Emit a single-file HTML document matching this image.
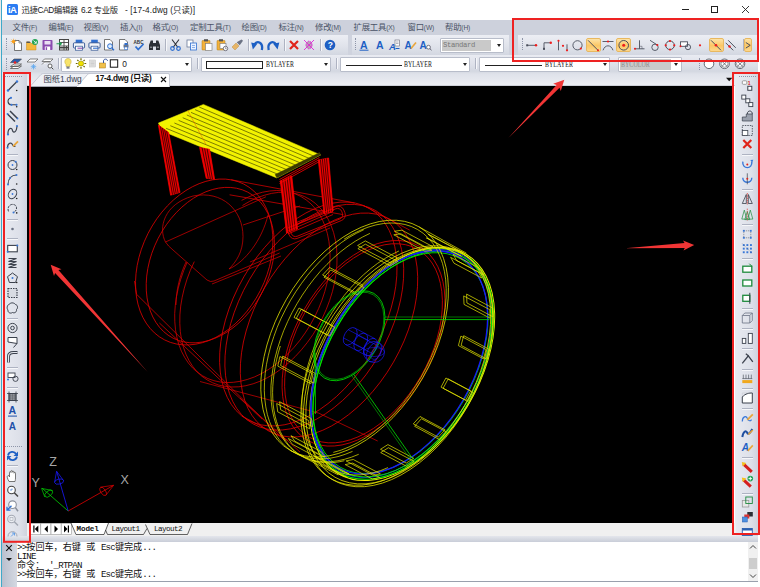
<!DOCTYPE html>
<html><head><meta charset="utf-8"><title>CAD</title><style>
html,body{margin:0;padding:0;}
body{width:760px;height:587px;overflow:hidden;background:#fff;position:relative;font-family:"Liberation Sans","Noto Sans CJK SC",sans-serif;}
.a{position:absolute;}
.t{position:absolute;white-space:nowrap;line-height:1;}
#title{left:0;top:0;width:760px;height:20px;background:#fff;}
#menu{left:2px;top:20px;width:756px;height:15px;background:#cdd1dc;}
#tb1{left:2px;top:35px;width:756px;height:20px;background:linear-gradient(#eceef4,#dfe2ea 60%,#d3d7e1);}
#tb2{left:2px;top:55px;width:756px;height:17px;background:linear-gradient(#e9ebf2,#dde0e9 60%,#d2d6e0);}
#tabrow{left:2px;top:71px;width:756px;height:15px;background:linear-gradient(#d3d7e0,#dfe2ea 20%,#e8eaf0 70%,#eef0f4);}
#ltb{left:2px;top:72px;width:25px;height:469px;background:linear-gradient(90deg,#e8eaf1,#dde0e9 70%,#cfd3de);}
#rtb{left:735px;top:72px;width:23px;height:464px;background:linear-gradient(90deg,#e8eaf1,#dde0e9 70%,#cfd3de);}
#canvas{left:27px;top:86px;width:706px;height:437px;background:#000;}
#ltabs{left:27px;top:523px;width:709px;height:13px;background:#f0f0f0;}
#split{left:2px;top:536px;width:756px;height:6px;background:linear-gradient(#e4e6ec,#c9cdd8);}
#cmdl{left:2px;top:542px;width:15px;height:45px;background:linear-gradient(90deg,#b9bfcd,#d5d9e2);}
#cmd{left:17px;top:542px;width:741px;height:39px;background:#fff;}
#cmdin{left:17px;top:582px;width:741px;height:5px;background:#fff;}
.mi{top:23px;font-size:8.4px;color:#4a5366;letter-spacing:-0.2px;}
.mi i{font-style:normal;font-size:6.6px;letter-spacing:-0.1px;}
.cmdt{left:17px;font-size:9.1px;color:#111;font-family:"Liberation Mono","Noto Sans Mono CJK SC","Noto Sans CJK SC",monospace;height:9px;line-height:9px;}
.cmdt b{font-weight:normal;letter-spacing:-0.8px;}
.combo{position:absolute;background:#fff;border:1px solid #b8bdca;box-sizing:border-box;border-radius:1px;}
.combo .ar{position:absolute;right:2.2px;top:50%;margin-top:-1px;width:0;height:0;border-left:2px solid transparent;border-right:2px solid transparent;border-top:3px solid #222;}
.sep{position:absolute;width:1px;background:#aeb3c2;box-shadow:1px 0 0 #f6f7fa;}
.grip{position:absolute;width:1px;border-left:1px dotted #8e95a8;}
.hl{position:absolute;background:linear-gradient(#fde3a6,#fbc766 55%,#fdd88c);border:1px solid #e8b860;box-sizing:border-box;border-radius:2px;}
.by{font-family:"Liberation Serif",serif;font-size:7.4px;color:#111;letter-spacing:0.1px;transform:scaleX(0.8);transform-origin:0 0;}
</style></head><body>
<div class="a" id="title"></div>
<div class="a" style="left:7px;top:4px;width:11px;height:10.5px;background:#2b7cf2;border-radius:1.5px;"></div>
<div class="t" style="left:8px;top:5.2px;font-size:9.5px;font-weight:bold;color:#fff;letter-spacing:-0.6px;">iA</div>
<div class="t" id="t1" style="left:21.6px;top:5.8px;font-size:8.3px;color:#1a1a1a;letter-spacing:-0.35px;">迅捷CAD编辑器</div>
<div class="t" id="t2" style="left:81px;top:5.8px;font-size:8.3px;color:#1a1a1a;letter-spacing:-0.3px;">6.2 专业版</div>
<div class="t" id="t3" style="left:125px;top:5.8px;font-size:8.3px;color:#1a1a1a;letter-spacing:0.11px;">- [17-4.dwg (只读)]</div>
<div class="a" style="left:681.5px;top:9px;width:7px;height:1px;background:#222;"></div>
<div class="a" style="left:711px;top:6px;width:7px;height:7px;border:1px solid #222;box-sizing:border-box;"></div>
<svg class="a" style="left:741px;top:5px" width="9" height="9"><path d="M1 1L8 8M8 1L1 8" stroke="#222" stroke-width="0.9" fill="none"/></svg>
<div class="a" style="left:1px;top:0;width:1px;height:587px;background:#3fa9c9;"></div>
<div class="a" style="left:0;top:0;width:1px;height:587px;background:#e8e8e8;"></div>
<div class="a" id="menu"></div><div class="t mi" style="left:12.5px">文件<i>(F)</i></div><div class="t mi" style="left:48.5px">编辑<i>(E)</i></div><div class="t mi" style="left:83.5px">视图<i>(V)</i></div><div class="t mi" style="left:120.0px">插入<i>(I)</i></div><div class="t mi" style="left:152.5px">格式<i>(O)</i></div><div class="t mi" style="left:190.0px">定制工具<i>(T)</i></div><div class="t mi" style="left:241.5px">绘图<i>(D)</i></div><div class="t mi" style="left:278.5px">标注<i>(N)</i></div><div class="t mi" style="left:315.0px">修改<i>(M)</i></div><div class="t mi" style="left:353.5px">扩展工具<i>(X)</i></div><div class="t mi" style="left:407.5px">窗口<i>(W)</i></div><div class="t mi" style="left:445.0px">帮助<i>(H)</i></div>
<div class="a" id="tb1"></div><div class="a" id="tb2"></div>
<div class="a" style="left:347.5px;top:35px;width:4px;height:20px;background:#cfd3de;"></div><div class="a" style="left:509px;top:35px;width:8.5px;height:20px;background:#cfd3de;"></div>
<div class="a" id="tabrow"></div>
<div class="a" id="ltb"></div><div class="a" id="rtb"></div>
<div class="a" style="left:27px;top:85px;width:708px;height:1px;background:#cdd0d8;"></div><div class="a" id="canvas"></div>
<div class="a" id="ltabs"></div><div class="a" id="split"></div>
<div class="a" id="cmdl"></div><div class="a" id="cmd"></div>
<div class="a" style="left:17px;top:581px;width:741px;height:1px;background:#9aa0ad;"></div><div class="a" id="cmdin"></div>
<div class="t cmdt" style="top:543px"><b>&gt;&gt;</b>按回车，右键 或 <b>Esc</b>键完成<b>...</b></div>
<div class="t cmdt" style="top:552px"><b>LINE</b></div>
<div class="t cmdt" style="top:561px">命令：<b> '_RTPAN</b></div>
<div class="t cmdt" style="top:570px"><b>&gt;&gt;</b>按回车，右键 或 <b>Esc</b>键完成<b>...</b></div>
<svg class="a" style="left:5px;top:544px" width="8" height="8"><path d="M1.2 1.2L6.8 6.8M6.8 1.2L1.2 6.8" stroke="#111" stroke-width="1.1"/></svg>
<div class="a" style="left:6px;top:558px;width:0;height:0;border-left:3px solid transparent;border-right:3px solid transparent;border-top:3.5px solid #111;"></div>
<div class="a" style="left:748px;top:542px;width:10px;height:39px;background:#f0f0f0;"></div>
<div class="a" style="left:749px;top:558px;width:8px;height:11px;background:#cdcdcd;"></div>
<svg class="a" style="left:749px;top:544px" width="8" height="6"><path d="M1 4.5L4 1.5L7 4.5" stroke="#444" stroke-width="1" fill="none"/></svg>
<svg class="a" style="left:749px;top:573px" width="8" height="6"><path d="M1 1.5L4 4.5L7 1.5" stroke="#444" stroke-width="1" fill="none"/></svg>
<svg class="a" style="left:27px;top:72px" width="720" height="15">
<path d="M3 14.5 L14 2.5 Q15 1.5 16.5 1.5 L63 1.5 L58 8 L53 14.5 Z" fill="#eef0f5" stroke="#b9bdca" stroke-width="0.7"/>
<path d="M50 14.5 L60.5 2.5 Q61.5 1.5 63 1.5 L141 1.5 Q142.5 1.5 142.5 3 L142.5 14.5 Z" fill="#fff" stroke="#b0b5c3" stroke-width="0.7"/>
<path d="M50 14.6 L142.5 14.6" stroke="#fff" stroke-width="1"/>
<path d="M699 5.8 L705.4 5.8 L702.2 9.3 Z" fill="#111"/>
</svg>
<div class="t" style="left:43.5px;top:75px;font-size:8.3px;color:#333b4d;letter-spacing:-0.1px;">图纸1.dwg</div>
<div class="t" style="left:95.5px;top:75px;font-size:8.2px;color:#111;font-weight:bold;letter-spacing:-0.25px;">17-4.dwg (只读)</div>
<svg class="a" style="left:160px;top:75.5px" width="7" height="7"><path d="M1 1L6 6M6 1L1 6" stroke="#111" stroke-width="1.1"/></svg>
<svg class="a" style="left:27px;top:523px" width="220" height="13">
<rect x="0" y="0" width="220" height="13" fill="#f0f0f0"/>
<g fill="#fff" stroke="#9a9a9a" stroke-width="0.6">
<rect x="3.6" y="0.5" width="10.2" height="11"/><rect x="13.8" y="0.5" width="10.2" height="11"/><rect x="24" y="0.5" width="10.2" height="11"/><rect x="34.2" y="0.5" width="10.2" height="11"/>
</g>
<g fill="#000">
<path d="M11.3 2.5 L7.8 6 L11.3 9.5Z"/><rect x="6.3" y="2.5" width="1.2" height="7"/>
<path d="M20.8 2.5 L17.3 6 L20.8 9.5Z"/>
<path d="M27.5 2.5 L31 6 L27.5 9.5Z"/>
<path d="M37 2.5 L40.5 6 L37 9.5Z"/><rect x="40.8" y="2.5" width="1.2" height="7"/>
</g>
<path d="M44 0 L49 11.5 L77 11.5 L81.5 0" fill="#fff" stroke="#222" stroke-width="0.7"/>
<path d="M78.5 7 L80.5 11.5 L116.5 11.5 L120 5.5 M118.5 1.5 L123 11.5 L160.5 11.5 L165 0.5" fill="none" stroke="#222" stroke-width="0.7"/>
</svg>
<div class="t" style="left:76.5px;top:525.5px;font-family:'Liberation Mono',monospace;font-size:7.6px;color:#111;letter-spacing:-0.1px;font-weight:bold;">Model</div>
<div class="t" style="left:111.5px;top:525.5px;font-family:'Liberation Mono',monospace;font-size:7.6px;color:#111;letter-spacing:-0.1px;letter-spacing:-0.55px;">Layout1</div>
<div class="t" style="left:154px;top:525.5px;font-family:'Liberation Mono',monospace;font-size:7.6px;color:#111;letter-spacing:-0.1px;letter-spacing:-0.55px;">Layout2</div>
<div class="sep" style="left:165.0px;top:39px;height:12px"></div>
<div class="sep" style="left:248.0px;top:39px;height:12px"></div>
<div class="sep" style="left:284.0px;top:39px;height:12px"></div>
<div class="sep" style="left:319.5px;top:39px;height:12px"></div>
<div class="sep" style="left:742.5px;top:39px;height:12px"></div>
<div class="sep" style="left:58.0px;top:58px;height:11px"></div>
<div class="sep" style="left:197.0px;top:58px;height:11px"></div>
<div class="sep" style="left:335.5px;top:58px;height:11px"></div>
<div class="sep" style="left:474.5px;top:58px;height:11px"></div>
<div class="grip" style="left:6.0px;top:38.0px;height:12px"></div>
<div class="grip" style="left:354.5px;top:38.0px;height:12px"></div>
<div class="grip" style="left:522.0px;top:38.0px;height:12px"></div>
<div class="grip" style="left:6.0px;top:57.5px;height:12px"></div>
<div class="grip" style="left:699.0px;top:57.5px;height:12px"></div>
<div class="hl" style="left:585.5px;top:37.5px;width:15px;height:14.5px"></div>
<div class="hl" style="left:616.2px;top:37.5px;width:15px;height:14.5px"></div>
<div class="hl" style="left:708.5px;top:37.5px;width:15px;height:14.5px"></div>
<div class="hl" style="left:744px;top:37.5px;width:8px;height:14.5px"></div>
<div class="a" style="left:7px;top:154.0px;width:11px;height:1px;background:#aeb3c2;box-shadow:0 1px 0 #f6f7fa"></div>
<div class="a" style="left:7px;top:219.0px;width:11px;height:1px;background:#aeb3c2;box-shadow:0 1px 0 #f6f7fa"></div>
<div class="a" style="left:7px;top:238.0px;width:11px;height:1px;background:#aeb3c2;box-shadow:0 1px 0 #f6f7fa"></div>
<div class="a" style="left:7px;top:318.0px;width:11px;height:1px;background:#aeb3c2;box-shadow:0 1px 0 #f6f7fa"></div>
<div class="a" style="left:7px;top:367.0px;width:11px;height:1px;background:#aeb3c2;box-shadow:0 1px 0 #f6f7fa"></div>
<div class="a" style="left:7px;top:387.0px;width:11px;height:1px;background:#aeb3c2;box-shadow:0 1px 0 #f6f7fa"></div>
<div class="a" style="left:7px;top:465.0px;width:11px;height:1px;background:#aeb3c2;box-shadow:0 1px 0 #f6f7fa"></div>
<div class="a" style="left:742px;top:154.4px;width:11px;height:1px;background:#aeb3c2;box-shadow:0 1px 0 #f6f7fa"></div>
<div class="a" style="left:742px;top:189.0px;width:11px;height:1px;background:#aeb3c2;box-shadow:0 1px 0 #f6f7fa"></div>
<div class="a" style="left:742px;top:224.0px;width:11px;height:1px;background:#aeb3c2;box-shadow:0 1px 0 #f6f7fa"></div>
<div class="a" style="left:742px;top:258.0px;width:11px;height:1px;background:#aeb3c2;box-shadow:0 1px 0 #f6f7fa"></div>
<div class="a" style="left:742px;top:308.0px;width:11px;height:1px;background:#aeb3c2;box-shadow:0 1px 0 #f6f7fa"></div>
<div class="a" style="left:742px;top:328.0px;width:11px;height:1px;background:#aeb3c2;box-shadow:0 1px 0 #f6f7fa"></div>
<div class="a" style="left:742px;top:348.0px;width:11px;height:1px;background:#aeb3c2;box-shadow:0 1px 0 #f6f7fa"></div>
<div class="a" style="left:742px;top:369.0px;width:11px;height:1px;background:#aeb3c2;box-shadow:0 1px 0 #f6f7fa"></div>
<div class="a" style="left:742px;top:388.0px;width:11px;height:1px;background:#aeb3c2;box-shadow:0 1px 0 #f6f7fa"></div>
<div class="a" style="left:742px;top:408.0px;width:11px;height:1px;background:#aeb3c2;box-shadow:0 1px 0 #f6f7fa"></div>
<div class="a" style="left:742px;top:456.7px;width:11px;height:1px;background:#aeb3c2;box-shadow:0 1px 0 #f6f7fa"></div>
<div class="a" style="left:742px;top:492.8px;width:11px;height:1px;background:#aeb3c2;box-shadow:0 1px 0 #f6f7fa"></div>
<div class="a" style="left:5px;top:75.5px;width:17px;height:0;border-top:1px dotted #8e95a8"></div>
<div class="a" style="left:5px;top:446.0px;width:17px;height:0;border-top:1px dotted #8e95a8"></div>
<div class="a" style="left:739px;top:75.5px;width:17px;height:0;border-top:1px dotted #8e95a8"></div>
<div class="combo" style="left:440px;top:37.5px;width:64px;height:15px;"><div class="a" style="left:1px;top:1px;width:49px;height:11px;background:#c9c9c9;"></div><div class="ar"></div></div>
<div class="t" style="left:443px;top:42.3px;font-family:'Liberation Mono',monospace;font-size:7.2px;color:#777;letter-spacing:-0.32px;">Standard</div>
<div class="combo" style="left:61px;top:57px;width:131px;height:14.5px;"><div class="ar"></div></div>
<div class="t" style="left:122.3px;top:59.8px;font-size:8.4px;color:#222;">0</div>
<div class="combo" style="left:201px;top:57px;width:130px;height:14.5px;"><div class="a" style="left:4px;top:3px;width:57px;height:7.5px;border:1px solid #222;box-sizing:border-box;background:#fff;"></div><div class="ar"></div></div>
<div class="t by" style="left:265.5px;top:61.4px;">BYLAYER</div>
<div class="combo" style="left:340px;top:57px;width:130px;height:14.5px;"><div class="a" style="left:4.5px;top:6.5px;width:56px;height:1px;background:#222;"></div><div class="ar"></div></div>
<div class="t by" style="left:404px;top:61.4px;">BYLAYER</div>
<div class="combo" style="left:479px;top:57px;width:131px;height:14.5px;"><div class="a" style="left:4.5px;top:6.5px;width:57px;height:1px;background:#222;"></div><div class="ar"></div></div>
<div class="t by" style="left:545px;top:61.4px;">BYLAYER</div>
<div class="combo" style="left:617.5px;top:57px;width:64px;height:14.5px;"><div class="a" style="left:1px;top:1px;width:51px;height:10.5px;background:#c9c9c9;"></div><div class="ar"></div></div>
<div class="t by" style="left:620.5px;top:61.4px;color:#8a8a8a;">BYCOLOR</div>
<svg class="a" style="left:0;top:0" width="760" height="587" viewBox="0 0 760 587"><defs><clipPath id="cv"><rect x="27" y="86" width="706" height="437"/></clipPath></defs><g clip-path="url(#cv)"><g fill="none"><ellipse cx="204.2" cy="262.0" rx="87.4" ry="63.0" transform="rotate(-63.1 204.2 262.0)" stroke="#dc0000" stroke-width="0.75"/><polyline points="241.6,200.4 248.6,196.9 255.6,194.2 262.6,192.2 269.5,191.0 276.3,190.5 282.9,190.8 289.2,192.0 295.3,193.9 300.9,196.5 306.2,199.9 311.1,204.0 315.4,208.8 319.3,214.2 322.6,220.2 325.3,226.7 327.4,233.7 328.9,241.2 329.8,249.0 330.1,257.2 329.7,265.6 328.7,274.1 327.1,282.8 324.8,291.5 322.0,300.1 318.6,308.6 314.6,317.0 310.2,325.1 305.2,332.9 299.9,340.3 294.1,347.3 288.0,353.7 281.7,359.7 275.0,365.0 268.2,369.7 261.3,373.7 254.3,377.0 247.2,379.5 240.3,381.3 233.4,382.3 226.7,382.6 220.1,382.0 213.9,380.7 207.9,378.6 202.4,375.7 197.2,372.1 192.5,367.9 188.3,362.9 184.6,357.3 181.4,351.2 178.8,344.5 176.9,337.3 175.5,329.8 174.8,321.8 174.7,313.6 175.3,305.2 176.5,296.6 178.3,287.9 180.7,279.3 183.7,270.6 187.2,262.1" stroke="#dc0000" stroke-width="0.75" fill="none"/><polyline points="242.5,205.5 249.7,201.3 256.9,197.9 264.2,195.3 271.4,193.4 278.5,192.4 285.4,192.2 292.1,192.8 298.5,194.3 304.5,196.6 310.2,199.6 315.4,203.4 320.2,208.0 324.4,213.2 328.1,219.1 331.1,225.6 333.6,232.6 335.4,240.2 336.6,248.1 337.0,256.4 336.9,265.0 336.0,273.8 334.5,282.7 332.4,291.7 329.6,300.6 326.2,309.5 322.3,318.2 317.8,326.6 312.8,334.8 307.3,342.5 301.4,349.8 295.2,356.6 288.6,362.9 281.8,368.5 274.8,373.4 267.6,377.6 260.4,381.1 253.1,383.8 245.9,385.7 238.8,386.8 231.9,387.0 225.2,386.4 218.8,385.1 212.7,382.8 207.0,379.8 201.7,376.1 197.0,371.6 192.7,366.4 189.0,360.5 185.9,354.1 183.4,347.1 181.5,339.6 180.3,331.7 179.8,323.4 179.9,314.9 180.7,306.1 182.2,297.2 184.3,288.2 187.0,279.2 190.3,270.4 194.3,261.6" stroke="#dc0000" stroke-width="0.75" fill="none"/><ellipse cx="308.3" cy="314.0" rx="122.0" ry="74.4" transform="rotate(-60.0 308.3 314.0)" stroke="#dc0000" stroke-width="0.75"/><ellipse cx="314.3" cy="317.2" rx="123.0" ry="75.0" transform="rotate(-60.0 314.3 317.2)" stroke="#dc0000" stroke-width="0.75"/><ellipse cx="329.0" cy="325.0" rx="122.0" ry="74.4" transform="rotate(-60.0 329.0 325.0)" stroke="#dc0000" stroke-width="0.75"/><ellipse cx="363.5" cy="343.3" rx="112.0" ry="68.3" transform="rotate(-60.0 363.5 343.3)" stroke="#dc0000" stroke-width="0.75"/><ellipse cx="363.5" cy="343.3" rx="108.5" ry="66.2" transform="rotate(-60.0 363.5 343.3)" stroke="#dc0000" stroke-width="0.75"/><ellipse cx="210.3" cy="265.1" rx="82.0" ry="58.6" transform="rotate(-63.0 210.3 265.1)" stroke="#dc0000" stroke-width="0.75"/><line x1="231.2" y1="179.8" x2="354.5" y2="202.9" stroke="#dc0000" stroke-width="0.75"/><line x1="363.4" y1="205.5" x2="409.8" y2="230.2" stroke="#dc0000" stroke-width="0.75"/><line x1="241.9" y1="416.0" x2="288.2" y2="440.7" stroke="#dc0000" stroke-width="0.75"/><line x1="229.6" y1="194.8" x2="343.2" y2="214.6" stroke="#dc0000" stroke-width="0.75"/><path d="M134.5 281 L136.6 294.3 L285 441" stroke="#dc0000" stroke-width="0.75" fill="none"/><line x1="159.4" y1="323.0" x2="262.0" y2="419.0" stroke="#dc0000" stroke-width="0.75"/><path d="M165.5 242 C158 228 164 204 193 196 C222 190 243 210 243 236.5 C243 252 236 262 229 269" stroke="#dc0000" stroke-width="0.70" fill="none"/><path d="M165.5 242 L265.9 196.8" stroke="#dc0000" stroke-width="0.70" fill="none"/><path d="M165.5 242 Q168 246 173 250 L207 280 Q210.5 282.5 214 281 L279.6 253" stroke="#dc0000" stroke-width="0.70" fill="none"/><path d="M212 284 L281 256" stroke="#dc0000" stroke-width="0.70" fill="none"/><path d="M186 262 C180 275 176 290 176 305" stroke="#dc0000" stroke-width="0.70" fill="none"/><path d="M229 269 C245 262 262 240 268 215" stroke="#dc0000" stroke-width="0.70" fill="none"/><path d="M243 225 L300 206 M250 262 L330 228" stroke="#dc0000" stroke-width="0.70" fill="none"/><rect x="286.5" y="215.0" width="60.0" height="15.0" rx="6.0" transform="rotate(-22 316.5 222.5)" stroke="#dc0000" stroke-width="0.75"/><rect x="289.0" y="217.0" width="55.0" height="11.0" rx="4.4" transform="rotate(-22 316.5 222.5)" stroke="#dc0000" stroke-width="0.75"/><path d="M200 381.5 L318.4 413 L377.7 441" stroke="#dc0000" stroke-width="0.70" fill="none"/><path d="M240 398 L300 452" stroke="#dc0000" stroke-width="0.70" fill="none"/><polygon points="158.4,123.1 203.4,104.4 320.6,154.9 276.8,177.9 162.0,131.0" stroke="#e8e800" stroke-width="0.50" fill="#f2f200"/><line x1="166.1" y1="128.3" x2="281.2" y2="175.6" stroke="#1a1a00" stroke-width="0.55"/><line x1="170.3" y1="125.7" x2="285.6" y2="173.3" stroke="#1a1a00" stroke-width="0.55"/><line x1="174.4" y1="123.0" x2="289.9" y2="171.0" stroke="#1a1a00" stroke-width="0.55"/><line x1="178.6" y1="120.4" x2="294.3" y2="168.7" stroke="#1a1a00" stroke-width="0.55"/><line x1="182.7" y1="117.7" x2="298.7" y2="166.4" stroke="#1a1a00" stroke-width="0.55"/><line x1="186.8" y1="115.0" x2="303.1" y2="164.1" stroke="#1a1a00" stroke-width="0.55"/><line x1="191.0" y1="112.4" x2="307.5" y2="161.8" stroke="#1a1a00" stroke-width="0.55"/><line x1="195.1" y1="109.7" x2="311.8" y2="159.5" stroke="#1a1a00" stroke-width="0.55"/><line x1="199.3" y1="107.1" x2="316.2" y2="157.2" stroke="#1a1a00" stroke-width="0.55"/><polygon points="276.8,177.9 320.6,154.9 319.5,152.5 275.0,174.5" stroke="#555500" stroke-width="0.30" fill="#3a3a00"/><polygon points="158.4,125.0 170.6,195.2 180.0,192.4 168.7,132.5" stroke="#ff0000" stroke-width="0.70" fill="#f00000"/><line x1="160.5" y1="126.5" x2="172.5" y2="194.6" stroke="#200000" stroke-width="0.75"/><line x1="162.5" y1="128.0" x2="174.4" y2="194.1" stroke="#200000" stroke-width="0.75"/><line x1="164.6" y1="129.5" x2="176.2" y2="193.5" stroke="#200000" stroke-width="0.75"/><line x1="166.6" y1="131.0" x2="178.1" y2="193.0" stroke="#200000" stroke-width="0.75"/><polygon points="199.6,147.4 206.2,178.3 214.6,179.3 209.6,149.3" stroke="#ff0000" stroke-width="0.70" fill="#f00000"/><line x1="202.1" y1="147.9" x2="208.3" y2="178.6" stroke="#200000" stroke-width="0.75"/><line x1="204.6" y1="148.4" x2="210.4" y2="178.8" stroke="#200000" stroke-width="0.75"/><line x1="207.1" y1="148.8" x2="212.5" y2="179.1" stroke="#200000" stroke-width="0.75"/><polygon points="280.3,181.0 286.5,233.0 297.5,229.0 291.8,176.0" stroke="#ff0000" stroke-width="0.70" fill="#f00000"/><line x1="282.6" y1="180.0" x2="288.7" y2="232.2" stroke="#200000" stroke-width="0.75"/><line x1="284.9" y1="179.0" x2="290.9" y2="231.4" stroke="#200000" stroke-width="0.75"/><line x1="287.2" y1="178.0" x2="293.1" y2="230.6" stroke="#200000" stroke-width="0.75"/><line x1="289.5" y1="177.0" x2="295.3" y2="229.8" stroke="#200000" stroke-width="0.75"/><polygon points="318.3,160.0 324.0,214.0 333.2,211.0 328.6,158.0" stroke="#ff0000" stroke-width="0.70" fill="#f00000"/><line x1="320.4" y1="159.6" x2="325.8" y2="213.4" stroke="#200000" stroke-width="0.75"/><line x1="322.4" y1="159.2" x2="327.7" y2="212.8" stroke="#200000" stroke-width="0.75"/><line x1="324.5" y1="158.8" x2="329.5" y2="212.2" stroke="#200000" stroke-width="0.75"/><line x1="326.5" y1="158.4" x2="331.4" y2="211.6" stroke="#200000" stroke-width="0.75"/><line x1="279.5" y1="179.5" x2="319.5" y2="157.5" stroke="#ff0000" stroke-width="0.80"/><line x1="279.5" y1="181.5" x2="319.5" y2="159.5" stroke="#ff0000" stroke-width="0.80"/><line x1="279.5" y1="183.5" x2="319.5" y2="161.5" stroke="#ff0000" stroke-width="0.80"/><line x1="288.0" y1="234.0" x2="333.0" y2="214.5" stroke="#ff0000" stroke-width="0.70"/><line x1="288.0" y1="231.0" x2="333.0" y2="211.5" stroke="#ff0000" stroke-width="0.70"/><line x1="288.0" y1="228.0" x2="333.0" y2="208.5" stroke="#ff0000" stroke-width="0.70"/><line x1="187.5" y1="110.0" x2="206.0" y2="144.5" stroke="#e06000" stroke-width="0.50"/><ellipse cx="402.3" cy="364.0" rx="127.0" ry="77.5" transform="rotate(-60.0 402.3 364.0)" stroke="#e8e800" stroke-width="1.00"/><ellipse cx="402.3" cy="364.0" rx="125.6" ry="76.6" transform="rotate(-60.0 402.3 364.0)" stroke="#00e400" stroke-width="1.10"/><ellipse cx="401.4" cy="363.5" rx="124.2" ry="75.8" transform="rotate(-60.0 401.4 363.5)" stroke="#1818ff" stroke-width="0.80"/><ellipse cx="402.3" cy="364.0" rx="123.0" ry="75.0" transform="rotate(-60.0 402.3 364.0)" stroke="#00e400" stroke-width="1.00"/><ellipse cx="400.5" cy="363.1" rx="120.3" ry="73.4" transform="rotate(-60.0 400.5 363.1)" stroke="#00e400" stroke-width="0.80"/><ellipse cx="399.2" cy="362.4" rx="121.6" ry="74.2" transform="rotate(-60.0 399.2 362.4)" stroke="#1818ff" stroke-width="1.30"/><ellipse cx="354.6" cy="338.6" rx="129.0" ry="78.7" transform="rotate(-60.0 354.6 338.6)" stroke="#e8e800" stroke-width="0.70"/><polyline points="344.1,239.1 352.1,234.3 360.1,230.4 368.0,227.2 375.9,224.9 383.6,223.5 391.1,223.0 398.2,223.3 405.1,224.5 411.6,226.6 417.6,229.5 423.2,233.3 428.2,237.9 432.7,243.2 436.6,249.3 439.8,256.0 442.5,263.4 444.4,271.3 445.7,279.8 446.2,288.7 446.1,297.9 445.3,307.5 443.8,317.4 441.6,327.4 438.7,337.4 435.2,347.5 431.1,357.5 426.4,367.4 421.2,377.1 415.4,386.4 409.2,395.4 402.6,404.0 395.6,412.1 388.3,419.6 380.8,426.5 373.0,432.7 365.1,438.2 357.1,443.0 349.1,446.9 341.2,450.1 333.3,452.4" stroke="#e8e800" stroke-width="0.70"/><polyline points="352.5,451.4 345.2,454.3 338.0,456.6 330.8,458.1 323.9,458.8 317.1,458.9 310.6,458.2 304.4,456.8 298.6,454.7 293.1,451.9 288.0,448.4 283.3,444.2 279.1,439.4 275.4,434.0 272.2,428.0 269.5,421.5 267.3,414.4 265.8,406.9 264.8,399.0 264.3,390.8 264.5,382.2 265.2,373.4 266.5,364.3 268.4,355.2 270.8,345.9 273.8,336.6 277.2,327.3 281.2,318.1 285.7,309.1 290.6,300.2 295.9,291.6 301.6,283.3 307.6,275.3 314.0,267.8 320.6,260.7 327.5,254.0 334.5,248.0 341.7,242.4 349.0,237.5 356.4,233.3 363.8,229.7" stroke="#e8e800" stroke-width="0.70"/><polyline points="358.7,454.3 351.4,457.2 344.2,459.4 337.1,460.9 330.2,461.7 323.5,461.7 317.0,461.1 310.8,459.7 305.0,457.6 299.5,454.8 294.4,451.3 289.8,447.1 285.6,442.3 281.9,436.9 278.7,430.9 276.0,424.4 273.9,417.4 272.3,410.0 271.3,402.1 270.9,393.9 271.0,385.3 271.8,376.5 273.1,367.5 274.9,358.4 277.3,349.2 280.3,339.9 283.7,330.7 287.7,321.5 292.1,312.5 297.0,303.7 302.3,295.1 308.0,286.8 314.0,278.9 320.3,271.3 327.0,264.3 333.8,257.7 340.8,251.6 348.0,246.1 355.3,241.2 362.6,237.0 369.9,233.4" stroke="#e8e800" stroke-width="0.70"/><polyline points="388.0,467.6 380.8,470.5 373.8,472.6 366.8,474.1 360.0,474.9 353.4,474.9 347.1,474.3 341.0,472.9 335.3,470.8 329.9,468.1 324.9,464.7 320.3,460.6 316.2,455.9 312.6,450.6 309.5,444.7 306.9,438.4 304.8,431.5 303.2,424.2 302.3,416.4 301.8,408.4 302.0,400.0 302.7,391.4 304.0,382.6 305.8,373.6 308.2,364.6 311.0,355.5 314.4,346.4 318.3,337.4 322.7,328.6 327.5,319.9 332.7,311.5 338.2,303.4 344.1,295.6 350.3,288.2 356.8,281.3 363.5,274.8 370.4,268.9 377.4,263.5 384.6,258.7 391.8,254.5 398.9,251.0" stroke="#e8e800" stroke-width="0.70"/><polyline points="344.4,460.7 339.1,461.8 334.0,462.5 328.9,462.7 324.0,462.6 319.2,462.1 314.6,461.2 310.2,459.8 305.9,458.1 301.8,456.0 298.0,453.6 294.4,450.7 291.0,447.5 287.9,444.0 285.1,440.1 282.5,435.9 280.2,431.4 278.2,426.6 276.5,421.5 275.1,416.2 274.0,410.6 273.2,404.8 272.8,398.8 272.6,392.6 272.8,386.3 273.3,379.8 274.1,373.2 275.2,366.5 276.6,359.7 278.3,352.8 280.3,346.0" stroke="#e8e800" stroke-width="0.70"/><ellipse cx="398.3" cy="367.0" rx="130.5" ry="79.6" transform="rotate(-60.0 398.3 367.0)" stroke="#e8e800" stroke-width="0.70"/><ellipse cx="395.8" cy="365.5" rx="130.5" ry="79.6" transform="rotate(-60.0 395.8 365.5)" stroke="#e8e800" stroke-width="0.70"/><ellipse cx="399.3" cy="366.0" rx="128.5" ry="78.4" transform="rotate(-60.0 399.3 366.0)" stroke="#e8e800" stroke-width="0.70"/><line x1="419.1" y1="226.9" x2="466.3" y2="253.1" stroke="#e8e800" stroke-width="0.70"/><line x1="290.1" y1="450.4" x2="338.3" y2="474.9" stroke="#e8e800" stroke-width="0.70"/><polygon points="466.6,294.1 466.9,302.9 492.9,316.8 492.7,308.0" stroke="#e8e800" stroke-width="0.70" fill="none"/><polygon points="463.7,295.9 464.0,304.4 490.0,318.2 489.8,309.7" stroke="#e8e800" stroke-width="0.70" fill="none"/><polygon points="463.7,335.7 461.1,345.4 486.2,358.8 488.8,349.1" stroke="#e8e800" stroke-width="0.70" fill="none"/><polygon points="460.9,336.1 458.4,345.6 483.5,358.9 486.0,349.5" stroke="#e8e800" stroke-width="0.70" fill="none"/><polygon points="448.2,378.9 443.1,388.3 467.8,401.4 472.9,392.1" stroke="#e8e800" stroke-width="0.70" fill="none"/><polygon points="445.9,378.0 441.0,387.1 465.7,400.2 470.6,391.1" stroke="#e8e800" stroke-width="0.70" fill="none"/><polygon points="421.4,418.7 414.6,426.3 439.5,439.6 446.4,431.9" stroke="#e8e800" stroke-width="0.70" fill="none"/><polygon points="420.0,416.5 413.3,423.9 438.3,437.2 445.0,429.8" stroke="#e8e800" stroke-width="0.70" fill="none"/><polygon points="388.4,447.7 380.7,452.6 406.5,466.3 414.1,461.4" stroke="#e8e800" stroke-width="0.70" fill="none"/><polygon points="387.9,444.6 380.5,449.3 406.3,463.1 413.7,458.3" stroke="#e8e800" stroke-width="0.70" fill="none"/><polygon points="352.7,463.1 345.2,464.6 372.3,479.0 379.7,477.5" stroke="#e8e800" stroke-width="0.70" fill="none"/><polygon points="353.3,459.5 346.1,460.9 373.1,475.3 380.4,473.9" stroke="#e8e800" stroke-width="0.70" fill="none"/><polygon points="318.7,462.2 312.6,460.0 341.2,475.2 347.4,477.5" stroke="#e8e800" stroke-width="0.70" fill="none"/><polygon points="320.4,458.6 314.4,456.4 343.1,471.7 349.1,473.9" stroke="#e8e800" stroke-width="0.70" fill="none"/><polygon points="292.3,444.3 288.4,438.5 318.8,454.7 322.7,460.4" stroke="#e8e800" stroke-width="0.70" fill="none"/><polygon points="294.8,441.2 291.0,435.7 321.4,451.8 325.1,457.3" stroke="#e8e800" stroke-width="0.70" fill="none"/><polygon points="277.7,411.8 276.7,403.5 308.6,420.5 309.6,428.8" stroke="#e8e800" stroke-width="0.70" fill="none"/><polygon points="280.6,409.7 279.6,401.7 311.5,418.7 312.5,426.7" stroke="#e8e800" stroke-width="0.70" fill="none"/><polygon points="277.8,366.1 279.9,356.5 313.0,374.0 310.8,383.7" stroke="#e8e800" stroke-width="0.70" fill="none"/><polygon points="280.6,365.5 282.7,356.1 315.8,373.7 313.7,383.1" stroke="#e8e800" stroke-width="0.70" fill="none"/><polygon points="294.0,317.4 299.0,308.0 332.6,325.9 327.6,335.2" stroke="#e8e800" stroke-width="0.70" fill="none"/><polygon points="296.3,318.3 301.2,309.2 334.7,327.0 329.9,336.1" stroke="#e8e800" stroke-width="0.70" fill="none"/><polygon points="322.6,275.0 329.6,267.5 362.9,285.2 355.9,292.7" stroke="#e8e800" stroke-width="0.70" fill="none"/><polygon points="324.0,277.2 330.8,269.9 364.0,287.6 357.3,294.9" stroke="#e8e800" stroke-width="0.70" fill="none"/><polygon points="357.6,245.5 365.3,240.9 397.7,258.1 390.0,262.7" stroke="#e8e800" stroke-width="0.70" fill="none"/><polygon points="357.9,248.6 365.4,244.2 397.8,261.4 390.3,265.9" stroke="#e8e800" stroke-width="0.70" fill="none"/><polygon points="394.5,231.2 401.9,230.2 432.9,246.7 425.6,247.7" stroke="#e8e800" stroke-width="0.70" fill="none"/><polygon points="393.8,234.8 400.9,233.8 431.9,250.3 424.8,251.3" stroke="#e8e800" stroke-width="0.70" fill="none"/><polygon points="428.1,234.3 434.0,237.1 463.3,252.7 457.4,249.9" stroke="#e8e800" stroke-width="0.70" fill="none"/><polygon points="426.3,237.9 432.0,240.5 461.4,256.2 455.6,253.5" stroke="#e8e800" stroke-width="0.70" fill="none"/><polygon points="453.1,254.4 456.7,260.5 484.3,275.2 480.8,269.1" stroke="#e8e800" stroke-width="0.70" fill="none"/><polygon points="450.6,257.3 454.0,263.2 481.7,278.0 478.3,272.0" stroke="#e8e800" stroke-width="0.70" fill="none"/><ellipse cx="349.3" cy="335.8" rx="49.0" ry="29.9" transform="rotate(-60.0 349.3 335.8)" stroke="#00e400" stroke-width="0.75"/><ellipse cx="349.3" cy="335.8" rx="47.5" ry="29.0" transform="rotate(-60.0 349.3 335.8)" stroke="#00e400" stroke-width="0.50"/><line x1="385.0" y1="319.6" x2="489.5" y2="319.6" stroke="#00e400" stroke-width="0.80"/><line x1="353.6" y1="374.2" x2="413.3" y2="459.5" stroke="#00e400" stroke-width="0.80"/><line x1="315.0" y1="353.0" x2="315.5" y2="414.0" stroke="#00e400" stroke-width="0.80"/><line x1="385.0" y1="317.0" x2="489.5" y2="317.0" stroke="#00e400" stroke-width="0.50"/><line x1="351.6" y1="375.4" x2="411.3" y2="460.8" stroke="#00e400" stroke-width="0.50"/><ellipse cx="350.2" cy="336.3" rx="9.5" ry="5.8" transform="rotate(-60.0 350.2 336.3)" stroke="#1818ff" stroke-width="0.65"/><ellipse cx="360.8" cy="341.9" rx="9.5" ry="5.8" transform="rotate(-60.0 360.8 341.9)" stroke="#1818ff" stroke-width="0.65"/><ellipse cx="370.5" cy="347.1" rx="9.5" ry="5.8" transform="rotate(-60.0 370.5 347.1)" stroke="#1818ff" stroke-width="0.65"/><line x1="355.0" y1="328.1" x2="375.3" y2="338.9" stroke="#1818ff" stroke-width="0.60"/><line x1="345.5" y1="344.5" x2="365.8" y2="355.3" stroke="#1818ff" stroke-width="0.60"/><line x1="356.9" y1="334.7" x2="377.2" y2="345.5" stroke="#1818ff" stroke-width="0.60"/><line x1="352.2" y1="342.9" x2="372.5" y2="353.7" stroke="#1818ff" stroke-width="0.60"/><line x1="343.5" y1="337.9" x2="363.8" y2="348.7" stroke="#1818ff" stroke-width="0.60"/><line x1="348.2" y1="329.7" x2="368.5" y2="340.5" stroke="#1818ff" stroke-width="0.60"/><circle cx="374.0" cy="352.0" r="10.5" stroke="#1818ff" stroke-width="0.65"/><ellipse cx="374.0" cy="352.0" rx="10.5" ry="6.4" transform="rotate(-60 374.0 352.0)" stroke="#1818ff" stroke-width="0.6"/><ellipse cx="374.0" cy="352.0" rx="10.5" ry="4.5" stroke="#1818ff" stroke-width="0.5"/><ellipse cx="376.0" cy="353.0" rx="7" ry="4.3" transform="rotate(-60 376.0 353.0)" stroke="#1818ff" stroke-width="0.5"/><line x1="68.2" y1="511.0" x2="113.6" y2="485.3" stroke="#e00000" stroke-width="0.80"/><line x1="68.2" y1="511.0" x2="42.2" y2="488.3" stroke="#00d000" stroke-width="0.80"/><line x1="68.2" y1="511.0" x2="56.7" y2="471.4" stroke="#1a1aff" stroke-width="0.80"/><path d="M113.6 485.3L100.3 487.2M113.6 485.3L105.6 495.6" stroke="#e00000" stroke-width="0.7" fill="none"/><ellipse cx="103.1" cy="491.4" rx="2.4" ry="4.6" transform="rotate(-32 103.1 491.4)" stroke="#e00000" stroke-width="0.7" fill="none"/><path d="M41.6 488.4L52.5 490.5M41.6 488.4L44.8 497" stroke="#00d000" stroke-width="0.7" fill="none"/><ellipse cx="48.7" cy="493.6" rx="2.6" ry="4.6" transform="rotate(50 48.7 493.6)" stroke="#00d000" stroke-width="0.7" fill="none"/><path d="M56.6 471.3L54.6 482.3M56.6 471.3L63.6 480.6" stroke="#1a1aff" stroke-width="0.7" fill="none"/><ellipse cx="59.1" cy="481.6" rx="4.6" ry="2.5" transform="rotate(-12 59.1 481.6)" stroke="#1a1aff" stroke-width="0.7" fill="none"/><text x="49.3" y="465.8" font-family="Liberation Sans,sans-serif" font-size="12.5" fill="#a6a6a6" stroke="none" font-weight="normal">Z</text><text x="31.4" y="486.8" font-family="Liberation Sans,sans-serif" font-size="12.5" fill="#a6a6a6" stroke="none" font-weight="normal">Y</text><text x="120.4" y="483.8" font-family="Liberation Sans,sans-serif" font-size="12.5" fill="#a6a6a6" stroke="none" font-weight="normal">X</text></g></g><g transform="translate(17.0 45.0)" ><path d="M-2.5 -4.5H2L4.5 -2V5.5H-2.5Z" fill="#fff" stroke="#555" stroke-width="0.8"/><path d="M2 -4.5V-2H4.5" fill="none" stroke="#555" stroke-width="0.6"/><circle cx="-3.5" cy="-3.5" r="1.6" fill="#f9a01c"/><path d="M-3.5 -6.3V-0.7M-6.3 -3.5H-0.7M-5.5 -5.5L-1.5 -1.5M-5.5 -1.5L-1.5 -5.5" stroke="#f9a01c" stroke-width="0.6"/></g><g transform="translate(32.0 45.0)" ><path d="M-5.5 -3H-2L-1 -1.5H4V5H-5.5Z" fill="#f5b83d" stroke="#c98a1a" stroke-width="0.5"/><path d="M-5.5 -3.5H-2.5L-1.5 -2H-5.5Z" fill="#555"/><circle cx="3" cy="-3" r="3" fill="#23a455"/><path d="M1.5 -4.5L4.3 -1.8M4.3 -3.8V-1.8H2.3" stroke="#fff" stroke-width="0.8" fill="none"/></g><g transform="translate(47.5 45.0)" ><rect x="-5" y="-5" width="10" height="10" rx="0.8" fill="#8a4bb0"/><rect x="-3" y="-4" width="6" height="3.5" fill="#e9e0f2"/><rect x="-2.7" y="1.5" width="5.4" height="3.5" fill="#fff"/><rect x="-1.8" y="2.2" width="1.4" height="2.8" fill="#8a4bb0"/></g><g transform="translate(63.0 45.0)" ><rect x="-3.5" y="-5.5" width="9" height="10.5" fill="#fff" stroke="#444" stroke-width="1"/><path d="M-3.5 -2.5H5.5M-3.5 1H5.5M1 -5.5V5M3.5 1V5" stroke="#444" stroke-width="0.9"/><rect x="-3.5" y="2" width="9" height="1.5" fill="#444"/><path d="M-6.5 -1.2H-2M-3.6 -3L-1.6 -1.2L-3.6 0.6" stroke="#21a054" stroke-width="1.1" fill="none"/></g><g transform="translate(79.0 45.0)" ><rect x="-3.3" y="-5.3" width="6.6" height="3.4" fill="#2f6fd0"/><rect x="-5.6" y="-2.2" width="11.2" height="5.2" rx="1" fill="#f4f6fa" stroke="#2a4f8f" stroke-width="0.9"/><rect x="-3.4" y="1.2" width="6.8" height="4" fill="#fff" stroke="#2a4f8f" stroke-width="0.7"/><path d="M-1.5 3.2H3.5" stroke="#8a4bb0" stroke-width="1.1"/></g><g transform="translate(94.5 45.0)" ><rect x="-3.3" y="-5.3" width="6.6" height="3.4" fill="#2f6fd0"/><rect x="-5.6" y="-2.2" width="11.2" height="5.2" rx="1" fill="#f4f6fa" stroke="#2a4f8f" stroke-width="0.9"/><rect x="-3.4" y="1.2" width="6.8" height="4" fill="#fff" stroke="#2a4f8f" stroke-width="0.7"/><path d="M-1.5 3.2H3.5" stroke="#2f6fd0" stroke-width="1.1"/></g><g transform="translate(109.0 45.0)" ><path d="M-4.5 -5.5H1L3.5 -3V5H-4.5Z" fill="#fff" stroke="#555" stroke-width="0.8"/><circle cx="1" cy="1.2" r="2.4" fill="#dfefff" stroke="#2f6fd0" stroke-width="1"/><path d="M2.8 3L5 5.3" stroke="#2f6fd0" stroke-width="1.3"/></g><g transform="translate(124.0 45.0)" ><path d="M-4.5 -5.5H1L3.5 -3V5H-4.5Z" fill="#fff" stroke="#555" stroke-width="0.8"/><rect x="-0.5" y="-0.5" width="5" height="3" fill="#6f7787"/><rect x="0.5" y="-2" width="3" height="2" fill="#2f6fd0"/><rect x="0.3" y="2" width="3.4" height="2.6" fill="#fff" stroke="#2f6fd0" stroke-width="0.6"/></g><g transform="translate(139.0 45.0)" ><text x="-5.5" y="-1.3" font-family="Liberation Sans,sans-serif" font-size="4.6" font-weight="bold" fill="#333">ABC</text><path d="M-3.5 1.5L-0.8 4.5L4.5 -1" stroke="#2f6fd0" stroke-width="1.8" fill="none"/></g><g transform="translate(154.5 45.0)" ><path d="M-5.5 5V0L-3.8 -4.5H-1.5V5ZM5.5 5V0L3.8 -4.5H1.5V5Z" fill="#2b2f36"/><rect x="-1.5" y="-2" width="3" height="3.5" fill="#2b2f36"/><path d="M-4.5 2.2H-2.3M2.3 2.2H4.5" stroke="#fff" stroke-width="0.6"/></g><g transform="translate(175.5 45.0)" ><path d="M-3.5 -5.5L2.5 2.5M3.5 -5.5L-2.5 2.5" stroke="#2b2f36" stroke-width="1.1"/><circle cx="-3" cy="3.5" r="1.8" fill="none" stroke="#2f6fd0" stroke-width="1.2"/><circle cx="3" cy="3.5" r="1.8" fill="none" stroke="#2f6fd0" stroke-width="1.2"/></g><g transform="translate(192.0 45.0)" ><rect x="-5" y="-5" width="6" height="7" fill="#fff" stroke="#6b7a99" stroke-width="0.8"/><rect x="-1.5" y="-2" width="6" height="7" fill="#eaf2ff" stroke="#2f6fd0" stroke-width="0.8"/><path d="M0 0.5H3M0 2.5H3" stroke="#2f6fd0" stroke-width="0.5"/></g><g transform="translate(207.0 45.0)" ><rect x="-5" y="-4.5" width="8" height="9.5" rx="0.6" fill="#f3b13a" stroke="#a9781d" stroke-width="0.5"/><rect x="-3" y="-5.8" width="4" height="2.2" fill="#555"/><rect x="-1.5" y="-1.5" width="6.5" height="7" fill="#fff" stroke="#777" stroke-width="0.6"/></g><g transform="translate(222.0 45.0)" ><rect x="-5" y="-4.5" width="8" height="9.5" rx="0.6" fill="#f3b13a" stroke="#a9781d" stroke-width="0.5"/><rect x="-3" y="-5.8" width="4" height="2.2" fill="#555"/><rect x="-2" y="-1.5" width="6" height="5" fill="#fff" stroke="#777" stroke-width="0.6"/><circle cx="3.5" cy="3.5" r="2.2" fill="#fff" stroke="#556" stroke-width="0.8"/><path d="M3.5 2.3V3.6H4.6" stroke="#556" stroke-width="0.6" fill="none"/></g><g transform="translate(237.5 45.0)" ><path d="M-5.5 2L-1.5 -2L1.5 1L-2.5 5Z" fill="#e7b567" stroke="#b58432" stroke-width="0.4"/><path d="M-0.8 -2.7L2.2 0.3L5.5 -4.2L4 -5.6Z" fill="#6b7284"/></g><g transform="translate(257.5 45.0)" ><path d="M4.3 5C6 -2.5 0 -5 -3.2 -0.5" stroke="#1d5fc4" stroke-width="2.3" fill="none"/><path d="M-6.3 -2.6L-0.2 -1.2L-4.6 4.6Z" fill="#1d5fc4"/></g><g transform="translate(273.0 45.0)" ><path d="M-4.3 5C-6 -2.5 0 -5 3.2 -0.5" stroke="#1d5fc4" stroke-width="2.3" fill="none"/><path d="M6.3 -2.6L0.2 -1.2L4.6 4.6Z" fill="#1d5fc4"/></g><g transform="translate(294.0 45.0)" ><path d="M-4 -4L4 4M4 -4L-4 4" stroke="#e0241b" stroke-width="2.2"/></g><g transform="translate(309.0 45.0)" ><ellipse cx="0" cy="0" rx="3" ry="3.8" fill="#b9a3b6" stroke="#e026d6" stroke-width="1" stroke-dasharray="1.6 0.8"/><path d="M-5 -5L5 5M5 -5L-5 5" stroke="#e026d6" stroke-width="0.9"/></g><g transform="translate(330.0 45.0)" ><circle r="5.3" fill="#1d5fc4"/><text x="-2.2" y="3" font-family="Liberation Sans,sans-serif" font-size="8.5" font-weight="bold" fill="#fff">?</text></g><g transform="translate(364.0 45.0)" ><text x="-4" y="3.6" font-family="Liberation Sans,sans-serif" font-size="10.5" font-weight="bold" fill="#1d5fc4">A</text><path d="M-4.5 5.2H4.5" stroke="#1d5fc4" stroke-width="1"/></g><g transform="translate(380.0 45.0)" ><text x="-4" y="4.2" font-family="Liberation Sans,sans-serif" font-size="10.5" font-weight="bold" fill="#1d5fc4">A</text></g><g transform="translate(395.0 45.0)" ><text x="-6" y="4.5" font-family="Liberation Sans,sans-serif" font-size="9.5" font-weight="bold" font-style="italic" fill="#1d5fc4">A</text><rect x="0" y="-5" width="4.5" height="6" fill="#fff" stroke="#667" stroke-width="0.6"/><path d="M1 -3H3.5M1 -1.5H3.5" stroke="#667" stroke-width="0.5"/><path d="M0.5 3.5L4.5 3.5" stroke="#1d5fc4" stroke-width="1"/></g><g transform="translate(410.5 45.0)" ><text x="-6" y="4.2" font-family="Liberation Sans,sans-serif" font-size="10" font-weight="bold" fill="#1d5fc4">A</text><path d="M0.5 3.5L5.5 -2.5" stroke="#e9a63a" stroke-width="1.6"/></g><g transform="translate(425.5 45.0)" ><text x="-6" y="4.2" font-family="Liberation Sans,sans-serif" font-size="10" font-weight="bold" fill="#1d5fc4">A</text><circle cx="3" cy="2.2" r="1.9" fill="#fff" stroke="#556" stroke-width="0.8"/><path d="M4.4 3.6L6 5.2" stroke="#556" stroke-width="1"/></g><g transform="translate(531.7 45.3)" ><path d="M-4.5 0H4" stroke="#4a4f5c" stroke-width="0.9"/><rect x="-5.5" y="-1" width="2" height="2" fill="#4a4f5c"/><circle cx="4.3" cy="0" r="1.2" fill="#ee1c1c"/></g><g transform="translate(547.0 45.3)" ><path d="M-3 4.5V-2.5H3.5" stroke="#4a4f5c" stroke-width="0.9" fill="none"/><rect x="-4" y="2.5" width="2" height="2" fill="#4a4f5c"/><circle cx="3.8" cy="-2.5" r="1.2" fill="#ee1c1c"/></g><g transform="translate(562.5 45.3)" ><path d="M-4 -4V5M4.5 -1V5" stroke="#4a4f5c" stroke-width="0.9"/><circle cx="-4" cy="-4.5" r="1.1" fill="#ee1c1c"/><circle cx="0.5" cy="0.5" r="1.1" fill="#ee1c1c"/><circle cx="4.5" cy="5" r="1.1" fill="#ee1c1c"/></g><g transform="translate(577.5 45.3)" ><circle r="4.6" fill="none" stroke="#4a4f5c" stroke-width="0.9"/><circle cx="3.3" cy="3.3" r="1.1" fill="#ee1c1c"/></g><g transform="translate(593.0 45.3)" ><path d="M-5 -5L5 5" stroke="#4a4f5c" stroke-width="1"/><circle cx="5" cy="5" r="1" fill="#ee1c1c"/></g><g transform="translate(608.0 45.3)" ><path d="M-5.5 -3.8H5.5" stroke="#4a4f5c" stroke-width="0.9"/><path d="M-5 5C-3 -1 3 -1 5 5" stroke="#4a4f5c" stroke-width="0.9" fill="none"/><circle cx="0" cy="-3.8" r="1.1" fill="#ee1c1c"/></g><g transform="translate(623.7 45.3)" ><circle r="4.8" fill="none" stroke="#4a4f5c" stroke-width="1"/><circle r="1.5" fill="#ee1c1c"/></g><g transform="translate(639.5 45.3)" ><path d="M0 -5V3.5M-5 3.5H5" stroke="#4a4f5c" stroke-width="0.9"/><path d="M0 1H2.5V3.5" stroke="#4a4f5c" stroke-width="0.5" fill="none"/><circle cx="-4.5" cy="3.5" r="1" fill="#ee1c1c"/></g><g transform="translate(654.5 45.3)" ><circle cx="0.5" cy="2" r="3.2" fill="none" stroke="#4a4f5c" stroke-width="0.9"/><path d="M-4.5 -5L2.5 -0.5" stroke="#4a4f5c" stroke-width="0.9"/><circle cx="2.8" cy="-0.3" r="1.1" fill="#ee1c1c"/></g><g transform="translate(670.0 45.3)" ><circle r="4.3" fill="none" stroke="#4a4f5c" stroke-width="1"/><circle cx="0" cy="-4.3" r="1.1" fill="#ee1c1c"/><circle cx="0" cy="4.3" r="1.1" fill="#ee1c1c"/><circle cx="-4.3" cy="0" r="1.1" fill="#ee1c1c"/><circle cx="4.3" cy="0" r="1.1" fill="#ee1c1c"/></g><g transform="translate(685.0 45.3)" ><rect x="-4.5" y="-3.5" width="7" height="4.5" fill="#fff" stroke="#4a4f5c" stroke-width="0.9"/><circle cx="3" cy="1.8" r="2.6" fill="none" stroke="#4a4f5c" stroke-width="0.9"/><circle cx="-4.5" cy="1" r="1" fill="#ee1c1c"/></g><g transform="translate(700.0 45.3)" ><circle r="1.1" fill="#ee1c1c"/></g><g transform="translate(716.0 45.3)" ><path d="M-5 -5L5 5" stroke="#4a4f5c" stroke-width="1"/><circle r="1.3" fill="#ee1c1c"/></g><g transform="translate(730.7 45.3)" ><path d="M-5 -2.5L2.5 5M-2.5 -5L5 2.5" stroke="#4a4f5c" stroke-width="1"/><circle cx="-1.2" cy="1.2" r="1.2" fill="#ee1c1c"/></g><g transform="translate(748.0 45.3)" ><path d="M-2.2 -2.8L2.2 0L-2.2 2.8" stroke="#4a4f5c" stroke-width="1" fill="none"/></g><g transform="translate(16.0 63.5)" ><path d="M-5.5 3L-2 0.5H5.5L2 3ZM-5.5 5L-2 2.5H5.5L2 5Z" fill="#fff" stroke="#444" stroke-width="0.7"/><path d="M-5.5 -1L-2 -4.5H5.5L2 -1Z" fill="#2a5fb0" stroke="#444" stroke-width="0.6"/><circle cx="-1" cy="-1" r="1.3" fill="#e22"/></g><g transform="translate(32.5 63.5)" ><path d="M-5.5 -1.5L-2.5 -4.5H5.5L2.5 -1.5Z" fill="#fff" stroke="#555" stroke-width="0.7"/><path d="M1 0.5V6M-1.7 3.2H3.7M-0.9 1.3L2.9 5.1M2.9 1.3L-0.9 5.1" stroke="#5aa7f0" stroke-width="0.8"/></g><g transform="translate(47.5 63.5)" ><path d="M-5.5 -2L-3 -4.5H5.5L3 -2ZM-5.5 1L-3 -1.5H3" fill="#fff" stroke="#555" stroke-width="0.7"/><circle cx="2.5" cy="2.5" r="2" fill="#fff" stroke="#444" stroke-width="0.8"/><path d="M4 4L5.8 5.8" stroke="#444" stroke-width="1"/></g><g transform="translate(68.0 63.5)" ><path d="M0 -5C3.5 -5 4 -1 2 1V3H-2V1C-4 -1 -3.5 -5 0 -5Z" fill="#f7e36a" stroke="#b9a53a" stroke-width="0.5"/><rect x="-1.5" y="3" width="3" height="2.2" fill="#7b7f8a"/></g><g transform="translate(81.0 63.5)" ><circle r="2.6" fill="#f1e200" stroke="#8a8200" stroke-width="0.6"/><path d="M0 -5.2V-3.4M0 5.2V3.4M-5.2 0H-3.4M5.2 0H3.4M-3.7 -3.7L-2.5 -2.5M3.7 3.7L2.5 2.5M-3.7 3.7L-2.5 2.5M3.7 -3.7L2.5 -2.5" stroke="#6e6800" stroke-width="1.2"/></g><g transform="translate(92.5 63.5)" ><rect x="-3" y="-3.5" width="6" height="7" fill="#e2e2e2" stroke="#bdbdbd" stroke-width="0.5"/><path d="M-2 -1.5H2M-2 0H2M-2 1.5H2" stroke="#bbb" stroke-width="0.5"/></g><g transform="translate(103.0 63.5)" ><rect x="-3.5" y="-0.5" width="6" height="5" fill="#f0c04a" stroke="#a87a18" stroke-width="0.5"/><path d="M0.5 -0.5V-2.5C0.5 -5 4.5 -5 4.5 -2.5" fill="none" stroke="#3a57a0" stroke-width="1"/></g><g transform="translate(114.0 63.5)" ><rect x="-3.7" y="-3.7" width="7.4" height="7.4" fill="#fff" stroke="#111" stroke-width="1"/></g><g transform="translate(709.0 63.8)" ><circle r="4.8" fill="#fff" stroke="#555b68" stroke-width="0.9"/></g><g transform="translate(724.5 63.8)" ><circle r="4.8" fill="#fff" stroke="#555b68" stroke-width="0.9"/><circle r="3.5" fill="none" stroke="#555b68" stroke-width="0.6"/><path d="M-2.5 -2.5L2.5 2.5M2.5 -2.5L-2.5 2.5" stroke="#555b68" stroke-width="0.8"/></g><g transform="translate(740.0 63.8)" ><circle r="4.8" fill="#fff" stroke="#555b68" stroke-width="0.9"/><circle r="3.5" fill="none" stroke="#555b68" stroke-width="0.6"/><path d="M-2.5 -2.5L2.5 2.5M2.5 -2.5L-2.5 2.5" stroke="#555b68" stroke-width="0.8"/></g><g transform="translate(12.5 86.0)" ><path d="M-4.5 4.5L4.5 -4.5" stroke="#3b414d" stroke-width="1.2"/><circle cx="-4.5" cy="4.5" r="1.2" fill="#3a78d8"/><circle cx="4.5" cy="-4.5" r="1.2" fill="#3a78d8"/><circle cx="4.2" cy="4.5" r="0.8" fill="#222"/></g><g transform="translate(12.5 102.3)" ><path d="M-1.5 -4.5C-6 -3 -5 2.5 -1 2.5H4" stroke="#3b414d" stroke-width="1.1" fill="none"/><circle cx="-1.5" cy="-4.5" r="1.1" fill="#3a78d8"/><circle cx="-1" cy="2.5" r="1.1" fill="#3a78d8"/><circle cx="4" cy="2.5" r="1.1" fill="#3a78d8"/><circle cx="4.2" cy="4.5" r="0.8" fill="#222"/></g><g transform="translate(12.5 116.0)" ><path d="M-5 -2L2.5 5.5M-2.5 -5L5 2.5" stroke="#3b414d" stroke-width="1.5"/><circle cx="-5" cy="-2" r="0.9" fill="#3a78d8"/><circle cx="5" cy="2.5" r="0.9" fill="#3a78d8"/></g><g transform="translate(12.5 130.5)" ><path d="M-4.5 4C-5 -2 -1 -4 0 0C1 3 4 2 4.5 -4.5" stroke="#3b414d" stroke-width="1.2" fill="none"/><circle cx="-4.5" cy="4" r="1.1" fill="#3a78d8"/><circle cx="4.5" cy="-4.5" r="1.1" fill="#3a78d8"/></g><g transform="translate(12.5 144.8)" ><path d="M-5 3C-5 -2 -1 -3 0 0C1 2 2 2 3 1" stroke="#3b414d" stroke-width="1.2" fill="none"/><path d="M0.5 1.5L5.5 -3.5" stroke="#e9a63a" stroke-width="1.8"/><circle cx="-5" cy="3" r="1" fill="#3a78d8"/></g><g transform="translate(12.5 165.0)" ><circle r="4.5" fill="none" stroke="#3b414d" stroke-width="1"/><circle cx="0" cy="0" r="0.9" fill="#3a78d8"/><circle cx="3.2" cy="-3.2" r="1" fill="#3a78d8"/><circle cx="4.2" cy="4.5" r="0.8" fill="#222"/></g><g transform="translate(12.5 179.5)" ><path d="M-4.5 5C-4.5 -1 -1 -4.5 4 -4.5" stroke="#3b414d" stroke-width="1.1" fill="none"/><circle cx="-4.5" cy="5" r="1" fill="#3a78d8"/><circle cx="4" cy="-4.5" r="1" fill="#3a78d8"/><circle cx="-2.5" cy="-1.5" r="1" fill="#3a78d8"/><circle cx="4.2" cy="4.5" r="0.8" fill="#222"/></g><g transform="translate(12.5 194.0)" ><ellipse rx="3.8" ry="5" transform="rotate(35)" fill="none" stroke="#3b414d" stroke-width="1"/><circle cx="0" cy="0" r="0.9" fill="#3a78d8"/><circle cx="4.2" cy="4.5" r="0.8" fill="#222"/></g><g transform="translate(12.5 208.4)" ><path d="M-4 3C-6 -2 -1 -6 3 -3C5 -1 4 3 1 4" stroke="#3b414d" stroke-width="1" fill="none" stroke-dasharray="2.5 1"/><circle cx="1" cy="4" r="1" fill="#3a78d8"/><circle cx="4.2" cy="4.5" r="0.8" fill="#222"/></g><g transform="translate(12.5 229.0)" ><circle r="1.3" fill="#6b7284"/></g><g transform="translate(12.5 248.6)" ><rect x="-4.8" y="-3.2" width="9.6" height="6.4" fill="#fff" stroke="#3b414d" stroke-width="1.1"/><circle cx="-4.8" cy="3.2" r="1" fill="#3a78d8"/><circle cx="4.8" cy="-3.2" r="1" fill="#3a78d8"/></g><g transform="translate(12.5 263.0)" ><path d="M-4 -4.5H4L-4 -1.5H4L-4 1.5H4L-4 4.5H4" stroke="#3b414d" stroke-width="1.2" fill="none"/></g><g transform="translate(12.5 278.0)" ><path d="M0 -5L5 -1.3L3.1 4.5H-3.1L-5 -1.3Z" fill="none" stroke="#3b414d" stroke-width="1"/><circle r="1" fill="#3a78d8"/><circle cx="4.2" cy="4.5" r="0.8" fill="#222"/></g><g transform="translate(12.5 293.0)" ><rect x="-4.5" y="-4.5" width="9" height="9" fill="#d8dbe3" stroke="#3b414d" stroke-width="1.2" stroke-dasharray="1.5 1"/></g><g transform="translate(12.5 308.0)" ><path d="M-3 -4C-1 -6 2 -5 3 -3.5C5.5 -3 5.5 0.5 4 1.5C4.5 4 2 5.5 0 4.5C-2 6 -5 4.5 -4.5 2C-6 0.5 -5.5 -3 -3 -4Z" fill="none" stroke="#3b414d" stroke-width="1"/></g><g transform="translate(12.5 328.0)" ><circle r="4.6" fill="none" stroke="#3b414d" stroke-width="1"/><circle r="1.8" fill="none" stroke="#3b414d" stroke-width="1"/></g><g transform="translate(12.5 342.0)" ><path d="M-4.5 -4.5H4.5V1.5L-4.5 0Z" fill="#fff" stroke="#3b414d" stroke-width="1"/><path d="M4.5 1.5L1 5.5" stroke="#3b414d" stroke-width="1"/></g><g transform="translate(12.5 357.0)" ><path d="M-4 5.5V-0.5C-4 -3.5 -1.5 -4.5 1 -4.5H5" stroke="#3b414d" stroke-width="3" fill="none"/><path d="M-4 5.5V-0.5C-4 -3.5 -1.5 -4.5 1 -4.5H5" stroke="#e3e6ed" stroke-width="1.2" fill="none"/></g><g transform="translate(12.5 377.0)" ><rect x="-4.5" y="-4" width="7" height="4.5" fill="#fff" stroke="#3b414d" stroke-width="0.9"/><circle cx="3" cy="1.8" r="2.6" fill="none" stroke="#3b414d" stroke-width="0.9"/><circle cx="-4.5" cy="2.5" r="1" fill="#3a78d8"/></g><g transform="translate(12.5 397.0)" ><rect x="-3.5" y="-3.5" width="7" height="7" fill="#9ea3ad" stroke="#3b414d" stroke-width="0.9"/><path d="M-5.5 -3.5H5.5M-5.5 3.5H5.5M-3.5 -5.5V5.5M3.5 -5.5V5.5" stroke="#3b414d" stroke-width="0.8"/><path d="M-3.5 0H3.5M0 -3.5V3.5M-3.5 -1.8H3.5M-3.5 1.8H3.5M-1.8 -3.5V3.5M1.8 -3.5V3.5" stroke="#444" stroke-width="0.35"/></g><g transform="translate(12.5 411.5)" ><text x="-4" y="2.8" font-family="Liberation Sans,sans-serif" font-size="10.5" font-weight="bold" fill="#1d4fa8">A</text><path d="M-4.5 4.6H4.5" stroke="#1d4fa8" stroke-width="1"/></g><g transform="translate(12.5 426.0)" ><text x="-3.8" y="3.6" font-family="Liberation Sans,sans-serif" font-size="10" font-weight="bold" fill="#1d4fa8">A</text></g><g transform="translate(12.5 456.0)" ><path d="M-4.5 -0.5C-3.5 -5 2 -5 3.5 -2" stroke="#1d5fc4" stroke-width="1.8" fill="none"/><path d="M5.5 -4.5V0H1Z" fill="#1d5fc4"/><path d="M4.5 0.5C3.5 5 -2 5 -3.5 2" stroke="#1d5fc4" stroke-width="1.8" fill="none"/><path d="M-5.5 4.5V0H-1Z" fill="#1d5fc4"/></g><g transform="translate(12.5 476.0)" ><path d="M-3.5 5.5C-5 3 -6 0 -4.5 -0.5C-3.5 -0.8 -3 1 -3 1V-3.5C-3 -4.8 -1.5 -4.8 -1.5 -3.5V-4.5C-1.5 -5.8 0 -5.8 0 -4.5V-3.8C0 -5 1.5 -5 1.5 -3.8V-2.8C1.5 -4 3 -4 3 -2.8V2C3 4 2.5 5.5 2.5 5.5Z" fill="#fff" stroke="#555" stroke-width="0.8"/></g><g transform="translate(12.5 491.0)" ><circle cx="-1" cy="-1" r="3.8" fill="#fff" stroke="#444" stroke-width="1.1"/><path d="M1.8 1.8L5.5 5.5" stroke="#444" stroke-width="1.5"/><path d="M-2.5 -1H-0.5V-2.5" stroke="#2f6fd0" stroke-width="0.7" fill="none"/></g><g transform="translate(12.5 505.7)" ><circle cx="0" cy="-1" r="3.8" fill="#fff" stroke="#8a909c" stroke-width="1.1"/><path d="M2.8 1.8L5.5 5.5" stroke="#8a909c" stroke-width="1.5"/><path d="M-5.5 4.5L-1 0M-5.5 1V4.5H-2" stroke="#2f6fd0" stroke-width="1.3" fill="none"/></g><g transform="translate(12.5 520.0)" ><circle cx="-1" cy="-1" r="3.8" fill="#eceef3" stroke="#a3a8b3" stroke-width="1.1"/><path d="M1.8 1.8L5.5 5.5" stroke="#a3a8b3" stroke-width="1.5"/><rect x="-2.5" y="-2.5" width="3" height="3" fill="none" stroke="#a3a8b3" stroke-width="0.6"/></g><g transform="translate(12.5 534.5)" ><path d="M-4.5 2C-4.5 -4.5 4.5 -4.5 4.5 2" fill="none" stroke="#a3a8b3" stroke-width="1"/><path d="M-1.5 2L2 -1.5M-0.5 -1.5H2V1" stroke="#5a9be8" stroke-width="0.9" fill="none"/></g><g transform="translate(747.3 85.3)" ><rect x="-5" y="-4.5" width="4.5" height="3.5" rx="1" fill="#fff" stroke="#888" stroke-width="0.8"/><rect x="0.5" y="1" width="4" height="4" fill="#fff" stroke="#3b414d" stroke-width="1"/><text x="0.5" y="-0.8" font-family="Liberation Sans,sans-serif" font-size="5" font-weight="bold" fill="#e0241b">1</text></g><g transform="translate(747.3 100.6)" ><rect x="-5.5" y="-5.5" width="4" height="4" fill="#fff" stroke="#3b414d" stroke-width="0.9"/><rect x="-1.5" y="-1.8" width="4" height="4" fill="#fff" stroke="#3b414d" stroke-width="0.9"/><rect x="1.5" y="2" width="4" height="4" fill="#fff" stroke="#3b414d" stroke-width="0.9"/></g><g transform="translate(747.3 116.0)" ><path d="M-5 5V1H-1V-2H5V5Z" fill="#9aa0ad" stroke="#3b414d" stroke-width="0.7"/><path d="M0 -2C0 -6 5 -6 5 -2" fill="none" stroke="#3b414d" stroke-width="1"/></g><g transform="translate(747.3 130.5)" ><rect x="-5" y="-5" width="10" height="10" fill="none" stroke="#3b414d" stroke-width="0.8" stroke-dasharray="1.5 1"/><rect x="-5" y="0" width="5.5" height="5" fill="#fff" stroke="#3b414d" stroke-width="0.8"/></g><g transform="translate(747.3 144.0)" ><path d="M-4 -4L4 4M4 -4L-4 4" stroke="#e0241b" stroke-width="2.2"/></g><g transform="translate(747.3 164.6)" ><path d="M-4.5 -3C-5.5 5 5.5 5 4.5 -3" fill="none" stroke="#3a78d8" stroke-width="1.4"/><circle cx="0" cy="0" r="1" fill="#e0241b"/><path d="M3 -4.5L4.8 -2.2L6 -4.8" fill="#3a78d8"/></g><g transform="translate(747.3 178.8)" ><path d="M-4.5 -1C-4.5 5 4.5 5 4.5 -1" fill="none" stroke="#3a78d8" stroke-width="1.4"/><path d="M0 -5.5V5.5" stroke="#3b414d" stroke-width="0.7"/><circle cx="0" cy="0" r="1" fill="#e0241b"/></g><g transform="translate(747.3 199.0)" ><path d="M-1 -4.5L-5 4.5H-1ZM1 -4.5L5 4.5H1Z" fill="none" stroke="#3b414d" stroke-width="0.8"/><path d="M0 -6V6" stroke="#e0241b" stroke-width="0.7" stroke-dasharray="1.5 0.8"/></g><g transform="translate(747.3 214.6)" ><path d="M-3 -4.5L-5.5 4.5H-0.5ZM3 -4.5L5.5 4.5H0.5ZM0 -3L-2.5 5H2.5Z" fill="none" stroke="#1e8a3c" stroke-width="0.7"/><path d="M0 -6V6" stroke="#e0241b" stroke-width="0.6" stroke-dasharray="1.5 0.8"/></g><g transform="translate(747.3 234.3)" ><rect x="-3.5" y="-3.5" width="7" height="7" fill="none" stroke="#3b414d" stroke-width="0.6" stroke-dasharray="1 1"/><rect x="-4.4" y="-4.4" width="1.8" height="1.8" fill="#3a78d8"/><rect x="2.6" y="-4.4" width="1.8" height="1.8" fill="#3a78d8"/><rect x="-4.4" y="2.6" width="1.8" height="1.8" fill="#3a78d8"/><rect x="2.6" y="2.6" width="1.8" height="1.8" fill="#3a78d8"/></g><g transform="translate(747.3 248.6)" ><rect x="-4.5" y="-4.5" width="1.9" height="1.9" fill="#3a78d8"/><rect x="-4.5" y="-0.9" width="1.9" height="1.9" fill="#3a78d8"/><rect x="-4.5" y="2.7" width="1.9" height="1.9" fill="#3a78d8"/><rect x="-0.9" y="-4.5" width="1.9" height="1.9" fill="#3a78d8"/><rect x="-0.9" y="-0.9" width="1.9" height="1.9" fill="#3a78d8"/><rect x="-0.9" y="2.7" width="1.9" height="1.9" fill="#3a78d8"/><rect x="2.7" y="-4.5" width="1.9" height="1.9" fill="#3a78d8"/><rect x="2.7" y="-0.9" width="1.9" height="1.9" fill="#3a78d8"/><rect x="2.7" y="2.7" width="1.9" height="1.9" fill="#3a78d8"/><path d="M-5 -5L5 5" stroke="#3b414d" stroke-width="0.4" stroke-dasharray="1 1"/></g><g transform="translate(747.3 268.7)" ><rect x="-4.5" y="-2.5" width="9" height="6" fill="#fff" stroke="#1e8a3c" stroke-width="1.3"/><path d="M2 -5L4.5 -2.5" stroke="#1e8a3c" stroke-width="1"/></g><g transform="translate(747.3 283.0)" ><rect x="-4.5" y="-3" width="9" height="6" fill="#fff" stroke="#1e8a3c" stroke-width="1.3"/></g><g transform="translate(747.3 298.3)" ><rect x="-4.5" y="-3" width="7" height="6" fill="#fff" stroke="#1e8a3c" stroke-width="1.3"/><path d="M2.5 -5.5V5.5" stroke="#3b414d" stroke-width="1"/></g><g transform="translate(747.3 318.0)" ><path d="M-5 -2.5H2.5V5H-5ZM-5 -2.5L-2.5 -5H5V2.5L2.5 5M2.5 -2.5L5 -5" fill="none" stroke="#6b7284" stroke-width="0.8"/></g><g transform="translate(747.3 338.4)" ><rect x="-5" y="0" width="3.5" height="5" fill="#fff" stroke="#3b414d" stroke-width="0.9"/><rect x="1" y="-5" width="4" height="10" fill="#fff" stroke="#3b414d" stroke-width="0.9"/></g><g transform="translate(747.3 358.8)" ><path d="M-5 4.5L1 -3L5.5 3" fill="none" stroke="#3b414d" stroke-width="1.3"/><path d="M-1.5 -5L1 -3" stroke="#3b414d" stroke-width="1.2"/><path d="M-4 4L0 0" stroke="#889" stroke-width="0.5" stroke-dasharray="1 0.8"/></g><g transform="translate(747.3 378.6)" ><rect x="-5" y="1.5" width="10" height="3" fill="#f0a81e"/><path d="M-5 0H5M-4 -4V0M-1.3 -4V0M1.3 -4V0M4 -4V0" stroke="#3b414d" stroke-width="0.6"/></g><g transform="translate(747.3 398.0)" ><path d="M-5 5V-5H5V-4C0 -4 -4 0 -4 5Z" fill="none" stroke="#3b414d" stroke-width="0.1"/><path d="M-5 5V-1C-2 -4.5 2 -5 5 -5V5Z" fill="#fff" stroke="#3b414d" stroke-width="1"/></g><g transform="translate(747.3 418.4)" ><path d="M-5 3C-5 -2 -1 -3 0 0C1 3 4 3 4 1" stroke="#3a78d8" stroke-width="1.2" fill="none"/><path d="M0 1.5L5.5 -4" stroke="#e9a63a" stroke-width="1.8"/></g><g transform="translate(747.3 433.0)" ><path d="M-5 4C-4 -2 -1 -3 0 0C1 2 3 0 5 -4" stroke="#1f4f9f" stroke-width="2" fill="none"/><path d="M1 1.5L5.5 -3" stroke="#e9a63a" stroke-width="1.6"/></g><g transform="translate(747.3 447.4)" ><text x="-5.5" y="4" font-family="Liberation Sans,sans-serif" font-size="10" font-weight="bold" font-style="italic" fill="#1d5fc4">A</text><path d="M0.5 3.5L5.5 -2" stroke="#e9a63a" stroke-width="1.6"/></g><g transform="translate(747.3 467.4)" ><path d="M-4 -3.5L4.5 4.5" stroke="#d41f1f" stroke-width="3"/><path d="M-5.5 -5.5L-1 -4.5L-4.5 -1Z" fill="#f3c21c"/></g><g transform="translate(747.3 481.6)" ><path d="M-4 -2L3.5 5" stroke="#d41f1f" stroke-width="3"/><path d="M-5.5 -4L-1 -3L-4.5 0.5Z" fill="#f3c21c"/><circle cx="3" cy="-3" r="2.8" fill="#23a455"/><path d="M3 -4.8V-1.2M1.2 -3H4.8" stroke="#fff" stroke-width="0.9"/></g><g transform="translate(747.3 502.0)" ><rect x="-5" y="-1.5" width="6.5" height="6.5" fill="#e8e8e8" stroke="#999" stroke-width="0.8"/><rect x="-1.5" y="-5" width="6.5" height="6.5" fill="none" stroke="#1e8a3c" stroke-width="0.9"/></g><g transform="translate(747.3 517.0)" ><rect x="0" y="-5" width="5.5" height="4.5" fill="#2b2f36"/><rect x="-3" y="-2.5" width="5" height="4" fill="#d33"/><rect x="-5" y="0" width="5" height="5" fill="#4d8fe0" stroke="#2a5fb0" stroke-width="0.5"/></g><g transform="translate(747.3 532.0)" ><rect x="-5" y="-3.5" width="10" height="7" fill="#fff" stroke="#2a5fb0" stroke-width="0.9"/><rect x="-5" y="-3.5" width="10" height="2" fill="#2a5fb0"/><path d="M-2 1.5H2" stroke="#444" stroke-width="0.8"/></g><polygon points="508.4,138.1 559.5,87.7 560.8,91.0 564.3,79.8 553.2,83.7 556.6,84.9" fill="#f03535" stroke="none"/><polygon points="147.9,372.2 58.4,270.0 61.5,269.2 50.7,264.8 54.0,275.9 55.1,273.0" fill="#f03535" stroke="none"/><polygon points="625.1,248.3 684.8,248.0 683.5,250.5 694.2,245.0 683.0,240.5 684.6,243.0" fill="#f03535" stroke="none"/><rect x="513.0" y="19.0" width="245.0" height="42.0" fill="none" stroke="#ee2222" stroke-width="2"/><rect x="4.0" y="73.0" width="26.0" height="468.8" fill="none" stroke="#ee2222" stroke-width="2"/><rect x="733.0" y="73.0" width="26.0" height="461.0" fill="none" stroke="#ee2222" stroke-width="2"/></svg>
</body></html>
